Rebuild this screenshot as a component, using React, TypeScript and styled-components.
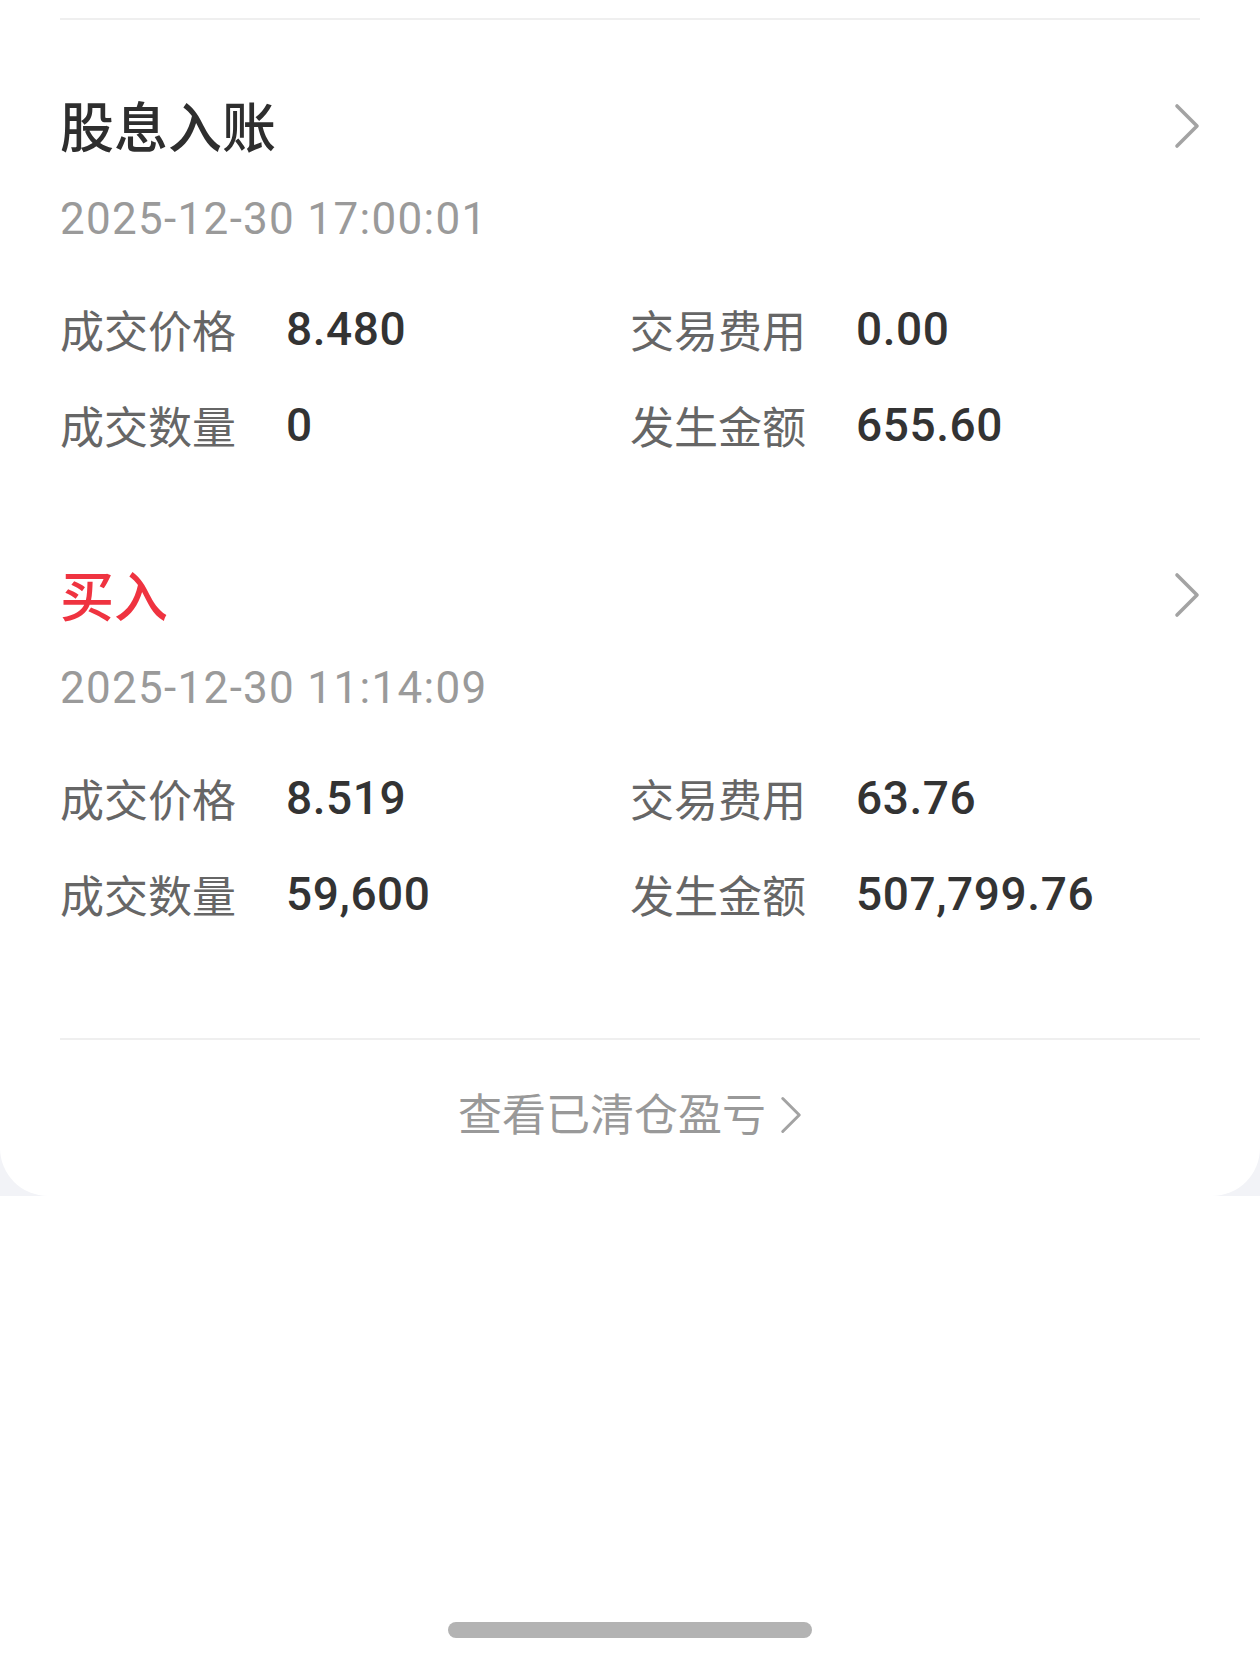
import React from 'react';
import styled, { createGlobalStyle } from 'styled-components';

const GlobalStyle = createGlobalStyle`
    html, body {
        margin: 0;
        padding: 0;
        background: #ffffff;
    }
    body {
        font-family: Roboto, "Noto Sans CJK SC", "Noto Sans", sans-serif;
    }
`;

const Page = styled.div`
    width: 1260px;
    height: 1658px;
    display: flex;
    flex-direction: column;
    overflow: hidden;
`;

const Backdrop = styled.div`
    background: #f2f3f7;
`;

const Card = styled.div`
    background: #ffffff;
    border-radius: 0 0 48px 48px;
    padding: 18px 60px 0;
`;

const Divider = styled.div<{ $top?: number }>`
    margin-top: ${p => p.$top ?? 0}px;
    height: 2px;
    background: #efefef;
`;

const Item = styled.div`
    padding: 72px 0 16px;
`;

const TitleRow = styled.div`
    height: 76px;
    display: flex;
    align-items: center;
    justify-content: space-between;
`;

const Title = styled.div<{ $buy?: boolean }>`
    font-size: 54px;
    font-weight: 500;
    line-height: 76px;
    color: ${p => (p.$buy ? '#ef3340' : '#2e2e2e')};
`;

const Chevron = styled.svg<{ $shift: number }>`
    margin-top: ${p => p.$shift}px;
    flex-shrink: 0;
`;

const DateText = styled.div`
    margin-top: 21px;
    font-size: 44px;
    line-height: 60px;
    color: #9a9a9a;
    letter-spacing: 1.3px;
`;

const Grid = styled.div`
    margin-top: 32px;
    display: grid;
    grid-template-columns: 1fr 1fr;
    grid-auto-rows: 96px;
`;

const Cell = styled.div`
    display: flex;
    align-items: center;
`;

const Label = styled.span`
    width: 226px;
    font-size: 44px;
    color: #666666;
`;

const Value = styled.span`
    font-size: 46px;
    font-weight: 500;
    letter-spacing: 0.6px;
    color: #333333;
`;

const Footer = styled.div`
    height: 156px;
    padding-bottom: 12px;
    box-sizing: border-box;
    display: flex;
    align-items: center;
    justify-content: center;
    gap: 14px;
`;

const FooterText = styled.span`
    font-size: 44px;
    color: #999999;
`;

const Spacer = styled.div`
    flex: 1;
`;

const HomeBar = styled.div`
    align-self: center;
    width: 364px;
    height: 16px;
    border-radius: 8px;
    background: #b3b3b3;
    margin-bottom: 20px;
`;

type Record = {
    title: string;
    buy?: boolean;
    time: string;
    price: string;
    fee: string;
    qty: string;
    amount: string;
};

const records: Record[] = [
    { title: '股息入账', time: '2025-12-30 17:00:01', price: '8.480', fee: '0.00', qty: '0', amount: '655.60' },
    { title: '买入', buy: true, time: '2025-12-30 11:14:09', price: '8.519', fee: '63.76', qty: '59,600', amount: '507,799.76' },
];

const Arrow: React.FC<{ w: number; h: number; shift: number }> = ({ w, h, shift }) => (
    <Chevron viewBox="0 0 26 46" width={w} height={h} $shift={shift}>
        <polyline points="3,3 23,23 3,43" fill="none" stroke="#a3a3a3" strokeWidth="3.6" strokeLinecap="round" strokeLinejoin="round" />
    </Chevron>
);

const App: React.FC = () => {
    return (
        <Page>
            <GlobalStyle />
            <Backdrop>
                <Card>
                    <Divider />
                    {records.map(r => (
                        <Item key={r.time}>
                            <TitleRow>
                                <Title $buy={r.buy}>{r.title}</Title>
                                <Arrow w={26} h={46} shift={-8} />
                            </TitleRow>
                            <DateText>{r.time}</DateText>
                            <Grid>
                                <Cell><Label>成交价格</Label><Value>{r.price}</Value></Cell>
                                <Cell><Label>交易费用</Label><Value>{r.fee}</Value></Cell>
                                <Cell><Label>成交数量</Label><Value>{r.qty}</Value></Cell>
                                <Cell><Label>发生金额</Label><Value>{r.amount}</Value></Cell>
                            </Grid>
                        </Item>
                    ))}
                    <Divider $top={80} />
                    <Footer>
                        <FooterText>查看已清仓盈亏</FooterText>
                        <Arrow w={22} h={38} shift={6} />
                    </Footer>
                </Card>
            </Backdrop>
            <Spacer />
            <HomeBar />
        </Page>
    );
};

export default App;
